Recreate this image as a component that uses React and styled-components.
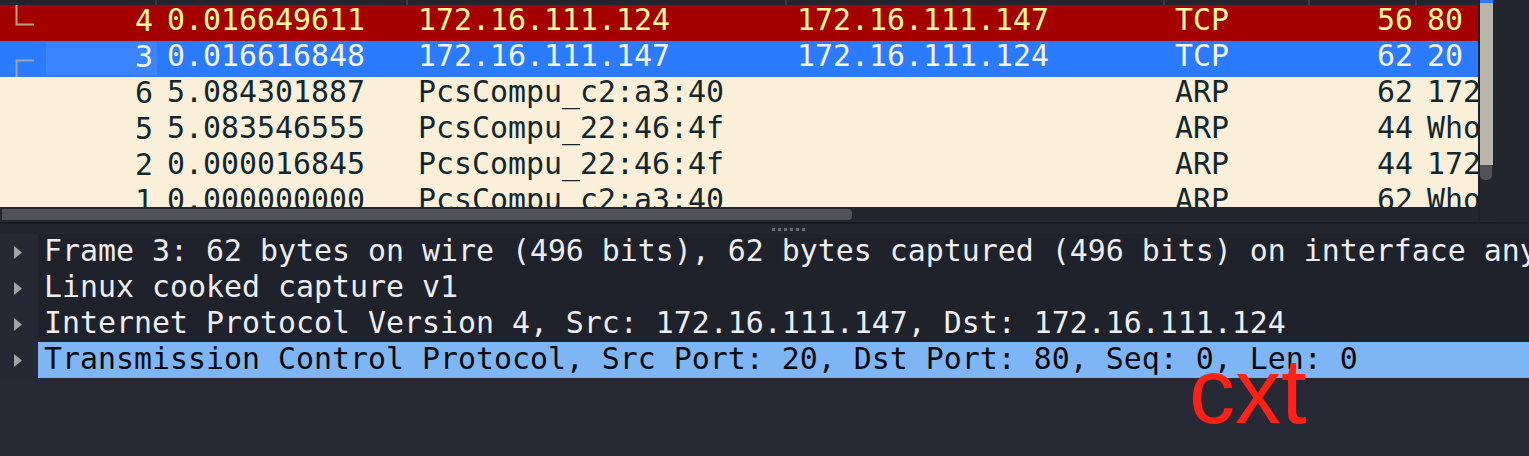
import React from 'react';
import styled, { createGlobalStyle } from 'styled-components';

const GlobalStyle = createGlobalStyle`
  body {
    margin: 0;
    background: #23262e;
    overflow: hidden;
  }
`;

const MONO = '"DejaVu Sans Mono", "Liberation Mono", monospace';

const Page = styled.div`
  width: 1529px;
  height: 456px;
  display: flex;
  flex-direction: column;
  font-family: ${MONO};
  font-size: 29.9px;
  position: relative;
  overflow: hidden;
`;

const TopPane = styled.div`
  display: flex;
  height: 222px;
`;

const ListArea = styled.div`
  width: 1478px;
  display: flex;
  flex-direction: column;
`;

const HeaderStrip = styled.div`
  height: 5px;
  display: grid;
  grid-template-columns: 157px 251px 379px 378px 145px 107px 1fr;
  background: #22252d;
`;

const HeaderCell = styled.div`
  border-right: 2px solid #3a3d46;
`;

const Rows = styled.div`
  height: 202px;
  overflow: hidden;
`;

const ROW_COLORS = {
  bad: { bg: '#a40000', fg: '#fffc9c' },
  sel: { bg: '#2b7bff', fg: '#f4f4ff' },
  arp: { bg: '#faefd8', fg: '#12272e' },
};

const PacketRow = styled.div`
  height: 36px;
  display: grid;
  grid-template-columns: 157px 251px 379px 378px 145px 107px 1fr;
  background: ${p => ROW_COLORS[p.$kind].bg};
  color: ${p => ROW_COLORS[p.$kind].fg};
  line-height: 30px;
  white-space: nowrap;
`;

const Cell = styled.div`
  overflow: hidden;
  padding-left: ${p => (p.$right ? 0 : 10)}px;
  padding-right: ${p => (p.$right ? 4 : 0)}px;
  text-align: ${p => (p.$right ? 'right' : 'left')};
`;

const NoCell = styled.div`
  display: flex;
  justify-content: space-between;
  align-items: flex-start;
`;

const TreeMark = styled.svg`
  margin-left: 15px;
  flex: none;
`;

const NoValue = styled.span`
  width: 107px;
  height: 33px;
  margin-top: 1px;
  padding-right: 4px;
  text-align: right;
  background: ${p => (p.$focus ? '#3a85ff' : 'transparent')};
`;

const HScroll = styled.div`
  height: 15px;
  background: #23262e;
  padding-top: 2px;
  box-sizing: border-box;
`;

const HThumb = styled.div`
  width: 850px;
  height: 11px;
  margin-left: 2px;
  background: #515258;
  border-radius: 0 4px 4px 0;
`;

const VScroll = styled.div`
  width: 16px;
  border-left: 2px solid #1f2128;
  display: flex;
  flex-direction: column;
  background: #23262e;
`;

const VTrack = styled.div`
  height: 165px;
  width: 13px;
  background: #bab6ab;
  border-top: 3px solid #2b7bff;
  box-sizing: border-box;
`;

const VKnob = styled.div`
  height: 15px;
  width: 12px;
  background: #505257;
  border-radius: 0 0 5px 5px;
`;

const RightGap = styled.div`
  flex: 1;
  background: #23252e;
`;

const Splitter = styled.div`
  height: 12px;
  border-top: 2px solid #1a1c22;
  box-sizing: border-box;
  background: #23262e;
  display: flex;
  align-items: center;
  gap: 3px;
  padding-left: 772px;
`;

const Dot = styled.span`
  width: 3px;
  height: 3px;
  background: #6b6d75;
`;

const DetailPane = styled.div`
  flex: 1;
  background: #272935;
  display: flex;
  flex-direction: column;
`;

const DetailRow = styled.div`
  height: 36px;
  display: flex;
`;

const Gutter = styled.div`
  width: 38px;
  flex: none;
  background: #262833;
  display: flex;
  align-items: center;
  padding-left: 14px;
  box-sizing: border-box;
`;

const DetailText = styled.div`
  flex: 1;
  padding-left: 6px;
  line-height: 33px;
  white-space: nowrap;
  overflow: hidden;
  background: ${p => (p.$selected ? '#7db5f5' : '#20222b')};
  color: ${p => (p.$selected ? '#0a0a0a' : '#eeeef2')};
`;

const Note = styled.div`
  position: absolute;
  left: 1189px;
  top: 345px;
  font-family: "Liberation Sans", Arial, sans-serif;
  font-size: 92px;
  line-height: 1;
  color: #ff2016;
`;

const packets = [
  { kind: 'bad', no: 4, time: '0.016649611', src: '172.16.111.124', dst: '172.16.111.147', proto: 'TCP', len: 56, info: '80', mark: 'end' },
  { kind: 'sel', no: 3, time: '0.016616848', src: '172.16.111.147', dst: '172.16.111.124', proto: 'TCP', len: 62, info: '20', mark: 'start', focus: true },
  { kind: 'arp', no: 6, time: '5.084301887', src: 'PcsCompu_c2:a3:40', dst: '', proto: 'ARP', len: 62, info: '172' },
  { kind: 'arp', no: 5, time: '5.083546555', src: 'PcsCompu_22:46:4f', dst: '', proto: 'ARP', len: 44, info: 'Who' },
  { kind: 'arp', no: 2, time: '0.000016845', src: 'PcsCompu_22:46:4f', dst: '', proto: 'ARP', len: 44, info: '172' },
  { kind: 'arp', no: 1, time: '0.000000000', src: 'PcsCompu_c2:a3:40', dst: '', proto: 'ARP', len: 62, info: 'Who' },
];

const details = [
  'Frame 3: 62 bytes on wire (496 bits), 62 bytes captured (496 bits) on interface any',
  'Linux cooked capture v1',
  'Internet Protocol Version 4, Src: 172.16.111.147, Dst: 172.16.111.124',
  'Transmission Control Protocol, Src Port: 20, Dst Port: 80, Seq: 0, Len: 0',
];

function Mark({ type }) {
  const color = type === 'end' ? '#b3a27e' : '#a7a29a';
  return (
    <TreeMark width="20" height="36" viewBox="0 0 20 36">
      {type === 'end' && <path d="M1.5 0 V19.5 H19" stroke={color} strokeWidth="2" fill="none" />}
      {type === 'start' && <path d="M19 19.5 H1.5 V36" stroke={color} strokeWidth="2" fill="none" />}
    </TreeMark>
  );
}

function Arrow() {
  return (
    <svg width="8" height="13" viewBox="0 0 8 13">
      <path d="M0 0 L8 6.5 L0 13 Z" fill="#a3a3a6" />
    </svg>
  );
}

export default function App() {
  return (
    <Page>
      <GlobalStyle />
      <TopPane>
        <ListArea>
          <HeaderStrip>
            {[0, 1, 2, 3, 4, 5].map(i => <HeaderCell key={i} />)}
          </HeaderStrip>
          <Rows>
            {packets.map(p => (
              <PacketRow key={p.no} $kind={p.kind}>
                <NoCell>
                  <Mark type={p.mark} />
                  <NoValue $focus={p.focus}>{p.no}</NoValue>
                </NoCell>
                <Cell>{p.time}</Cell>
                <Cell>{p.src}</Cell>
                <Cell>{p.dst}</Cell>
                <Cell>{p.proto}</Cell>
                <Cell $right>{p.len}</Cell>
                <Cell>{p.info}</Cell>
              </PacketRow>
            ))}
          </Rows>
          <HScroll>
            <HThumb />
          </HScroll>
        </ListArea>
        <VScroll>
          <VTrack />
          <VKnob />
        </VScroll>
        <RightGap />
      </TopPane>
      <Splitter>
        {[0, 1, 2, 3, 4, 5].map(i => <Dot key={i} />)}
      </Splitter>
      <DetailPane>
        {details.map((d, i) => (
          <DetailRow key={d}>
            <Gutter>
              <Arrow />
            </Gutter>
            <DetailText $selected={i === 3}>{d}</DetailText>
          </DetailRow>
        ))}
      </DetailPane>
      <Note>cxt</Note>
    </Page>
  );
}
